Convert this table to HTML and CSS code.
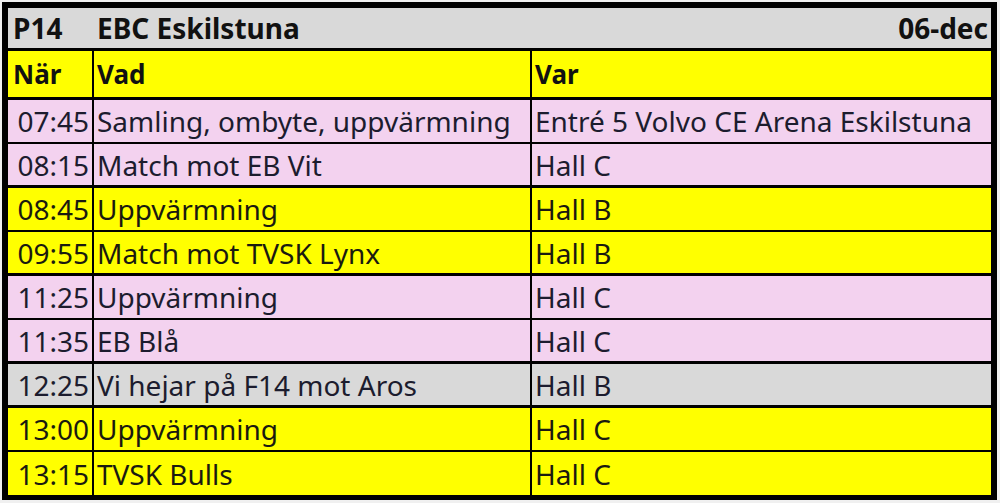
FILE: index.html
```html
<!DOCTYPE html>
<html lang="sv">
<head>
<meta charset="utf-8">
<title>P14 EBC Eskilstuna</title>
<link rel="stylesheet" href="styles.css">
</head>
<body>
<div class="sheet">
<table class="schedule">
  <colgroup>
    <col class="c-when">
    <col class="c-what">
    <col class="c-where">
  </colgroup>
  <tr class="title">
    <td class="left">P14</td>
    <td>EBC Eskilstuna</td>
    <td class="right">06-dec</td>
  </tr>
  <tr class="head">
    <td class="left">När</td>
    <td>Vad</td>
    <td>Var</td>
  </tr>
  <tr class="pink thin"><td class="time">07:45</td><td>Samling, ombyte, uppvärmning</td><td>Entré 5 Volvo CE Arena Eskilstuna</td></tr>
  <tr class="pink thick"><td class="time">08:15</td><td>Match mot EB Vit</td><td>Hall C</td></tr>
  <tr class="yellow thin"><td class="time">08:45</td><td>Uppvärmning</td><td>Hall B</td></tr>
  <tr class="yellow thick"><td class="time">09:55</td><td>Match mot TVSK Lynx</td><td>Hall B</td></tr>
  <tr class="pink thin"><td class="time">11:25</td><td>Uppvärmning</td><td>Hall C</td></tr>
  <tr class="pink thick"><td class="time">11:35</td><td>EB Blå</td><td>Hall C</td></tr>
  <tr class="gray thick"><td class="time">12:25</td><td>Vi hejar på F14 mot Aros</td><td>Hall B</td></tr>
  <tr class="yellow thin"><td class="time">13:00</td><td>Uppvärmning</td><td>Hall C</td></tr>
  <tr class="yellow last"><td class="time">13:15</td><td>TVSK Bulls</td><td>Hall C</td></tr>
</table>
</div>
</body>
</html>
```

FILE: styles.css
```css
html, body {
  margin: 0;
  padding: 0;
}
body {
  width: 1000px;
  height: 503px;
  background: #f0f0f0;
  font-family: "Noto Sans", "Open Sans", sans-serif;
  color: #1c1c2e;
  overflow: hidden;
}
.sheet {
  margin: 2px 0 0 2px;
  width: 995px;
  height: 498px;
  box-sizing: border-box;
  border: 6px solid #000;
  background: #000;
}
.schedule {
  width: 100%;
  border-collapse: separate;
  border-spacing: 0;
  table-layout: fixed;
}
.c-when { width: 86px; }
.c-what { width: 438px; }
.schedule td {
  padding: 0 0 0 3px;
  font-size: 28px;
  line-height: 1;
  white-space: nowrap;
  overflow: hidden;
  vertical-align: middle;
  border-right: 2px solid #000;
}
.schedule td:last-child { border-right: 0; }

.title td {
  background: #d9d9d9;
  height: 40px;
  font-weight: 700;
  font-size: 28px;
  border-right: 0;
  border-bottom: 3px solid #000;
  color: #111;
}
.title .right { text-align: right; padding-right: 3px; }
.title .left { padding-left: 5px; }

.head td {
  background: #ffff00;
  height: 46px;
  font-weight: 700;
  font-size: 26px;
  border-bottom: 3px solid #000;
  color: #111;
}
.head .left { padding-left: 5px; }

.schedule td.time {
  text-align: right;
  padding: 0 3px 0 0;
}

.pink td { background: #f3d2ef; }
.yellow td { background: #ffff00; color: #1a1a10; }
.gray td { background: #d9d9d9; }

.thin td { height: 42px; border-bottom: 2px solid #000; }
.thick td { height: 41px; border-bottom: 3px solid #000; }
.last td { height: 43px; }
```
